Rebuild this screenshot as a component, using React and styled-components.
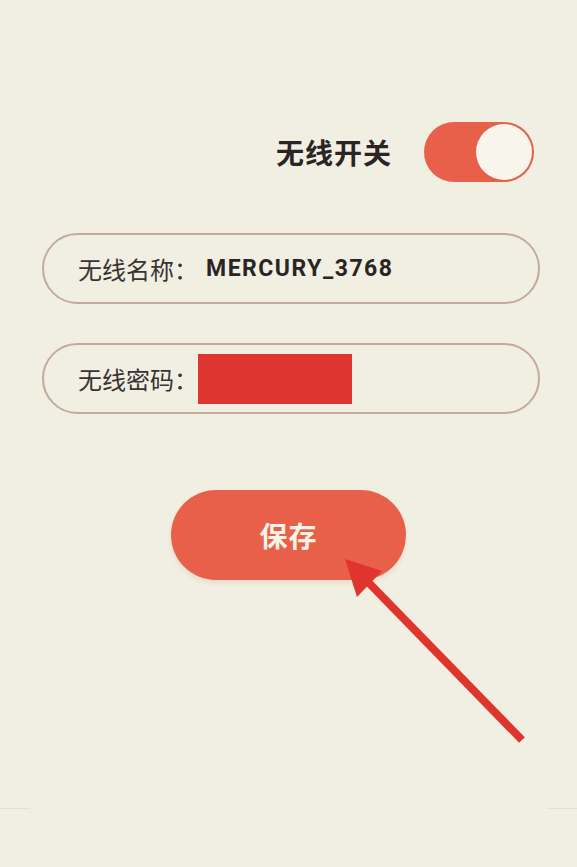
import React from 'react'
import styled, { createGlobalStyle } from 'styled-components'

const Global = createGlobalStyle`
  html, body {
    margin: 0;
    padding: 0;
    background: #f0efe2;
  }
  body {
    font-family: "Noto Sans CJK SC", "Noto Sans", sans-serif;
  }
`

const Page = styled.div`
  position: relative;
  width: 577px;
  height: 867px;
  background: #f0efe2;
  padding-top: 122px;
  box-sizing: border-box;
  overflow: hidden;
`

const SwitchRow = styled.div`
  display: flex;
  justify-content: flex-end;
  align-items: center;
  gap: 32px;
  padding-right: 43px;
`

const SwitchLabel = styled.span`
  font-size: 28px;
  font-weight: 700;
  color: #2a2424;
  letter-spacing: 1px;
`

const Toggle = styled.div`
  width: 110px;
  height: 60px;
  border-radius: 30px;
  background: #e8604a;
  display: flex;
  justify-content: ${p => (p.on ? 'flex-end' : 'flex-start')};
  align-items: center;
  padding: 2px;
  box-sizing: border-box;
`

const Knob = styled.div`
  width: 56px;
  height: 56px;
  border-radius: 50%;
  background: #f7f5ec;
`

const Fields = styled.div`
  display: flex;
  flex-direction: column;
  gap: 39px;
  margin: 51px 37px 0 42px;
`

const Field = styled.div`
  height: 71px;
  border: 2px solid #c4aa9c;
  border-radius: 36px;
  box-sizing: border-box;
  display: flex;
  align-items: center;
  padding-left: 34px;
`

const FieldLabel = styled.span`
  font-size: 24px;
  color: #3a3232;
`

const FieldValue = styled.span`
  font-family: Roboto, "Noto Sans", sans-serif;
  font-size: 23px;
  font-weight: 700;
  letter-spacing: 1.5px;
  color: #2a2424;
  margin-left: 8px;
`

const Redacted = styled.span`
  display: inline-block;
  width: 154px;
  height: 50px;
  background: #de3530;
`

const ButtonRow = styled.div`
  display: flex;
  padding-left: 171px;
  margin-top: 76px;
`

const SaveButton = styled.button`
  width: 235px;
  height: 90px;
  border: none;
  border-radius: 45px;
  background: #e8604a;
  color: #f7f3e6;
  font-family: "Noto Sans CJK SC", sans-serif;
  font-size: 28px;
  font-weight: 700;
  letter-spacing: 1px;
  box-shadow: 0 3px 4px rgba(160, 80, 60, 0.12);
`

const Arrow = styled.svg`
  position: absolute;
  left: 0;
  top: 0;
  pointer-events: none;
`

const FootLine = styled.div`
  position: absolute;
  top: 808px;
  left: 0;
  right: 0;
  display: flex;
  justify-content: space-between;
  & > span {
    width: 30px;
    height: 1px;
    background: #e6e2d2;
  }
`

export default function App() {
  return (
    <Page>
      <Global />
      <SwitchRow>
        <SwitchLabel>无线开关</SwitchLabel>
        <Toggle on>
          <Knob />
        </Toggle>
      </SwitchRow>
      <Fields>
        <Field>
          <FieldLabel>无线名称：</FieldLabel>
          <FieldValue>MERCURY_3768</FieldValue>
        </Field>
        <Field>
          <FieldLabel>无线密码：</FieldLabel>
          <Redacted />
        </Field>
      </Fields>
      <ButtonRow>
        <SaveButton>保存</SaveButton>
      </ButtonRow>
      <Arrow width="577" height="867" viewBox="0 0 577 867">
        <line x1="522" y1="740" x2="368" y2="582" stroke="#e0352e" strokeWidth="8" />
        <polygon points="345,559 357,597 382,571" fill="#e0352e" />
      </Arrow>
      <FootLine>
        <span />
        <span />
      </FootLine>
    </Page>
  )
}
